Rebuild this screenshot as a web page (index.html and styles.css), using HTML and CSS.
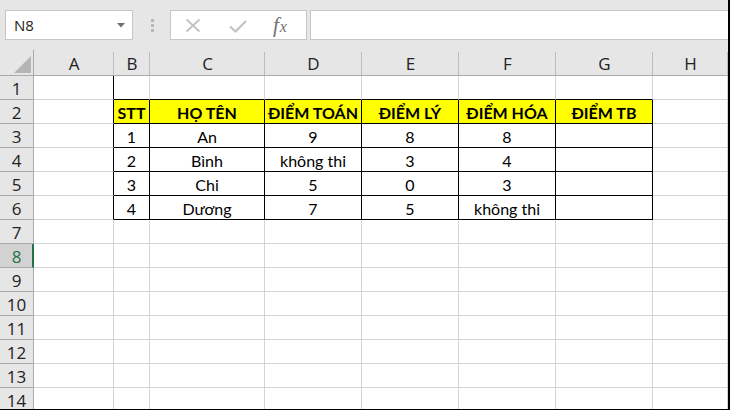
FILE: index.html
```html
<!DOCTYPE html>
<html>
<head>
<meta charset="utf-8">
<link rel="stylesheet" href="styles.css">
</head>
<body>
<div class="app">
  <div class="fbar">
    <div class="namebox">
      <span class="ref">N8</span>
      <svg class="caret" width="8" height="5" viewBox="0 0 8 5"><path d="M0 0H8L4 4.5Z" fill="#707070"/></svg>
    </div>
    <div class="grip"><i></i><i></i><i></i></div>
    <div class="fxbox">
      <svg class="ico" width="16" height="15" viewBox="0 0 16 15"><path d="M1.5 1.5L14.5 13.5M14.5 1.5L1.5 13.5" stroke="#c2c2c2" stroke-width="1.8" fill="none"/></svg>
      <svg class="ico" width="18" height="13" viewBox="0 0 18 13"><path d="M1 6.5L6.5 11.5L17 1" stroke="#c2c2c2" stroke-width="2.2" fill="none"/></svg>
      <span class="fx"><i>f</i><i class="fxx">x</i></span>
    </div>
    <div class="finput"></div>
  </div>
  <div class="sheet">
    <div class="ch corner"><svg width="17" height="17" viewBox="0 0 17 17"><path d="M17 0V17H0Z" fill="#b5b5b5"/></svg></div>
    <div class="ch">A</div><div class="ch">B</div><div class="ch">C</div><div class="ch">D</div><div class="ch">E</div><div class="ch">F</div><div class="ch">G</div><div class="ch">H</div>

    <div class="rh">1</div><div class="c lb"></div><div class="c tb"></div><div class="c tb"></div><div class="c tb"></div><div class="c tb"></div><div class="c tb"></div><div class="c tb"></div><div class="c"></div>

    <div class="rh">2</div><div class="c lb"></div><div class="c t hd">STT</div><div class="c t hd">HỌ TÊN</div><div class="c t hd">ĐIỂM TOÁN</div><div class="c t hd">ĐIỂM LÝ</div><div class="c t hd">ĐIỂM HÓA</div><div class="c t hd">ĐIỂM TB</div><div class="c"></div>

    <div class="rh">3</div><div class="c lb"></div><div class="c t">1</div><div class="c t">An</div><div class="c t">9</div><div class="c t">8</div><div class="c t">8</div><div class="c t"></div><div class="c"></div>

    <div class="rh">4</div><div class="c lb"></div><div class="c t">2</div><div class="c t">Bình</div><div class="c t">không thi</div><div class="c t">3</div><div class="c t">4</div><div class="c t"></div><div class="c"></div>

    <div class="rh">5</div><div class="c lb"></div><div class="c t">3</div><div class="c t">Chi</div><div class="c t">5</div><div class="c t">0</div><div class="c t">3</div><div class="c t"></div><div class="c"></div>

    <div class="rh">6</div><div class="c lb"></div><div class="c t">4</div><div class="c t">Dương</div><div class="c t">7</div><div class="c t">5</div><div class="c t">không thi</div><div class="c t"></div><div class="c"></div>

    <div class="rh">7</div><div class="c"></div><div class="c"></div><div class="c"></div><div class="c"></div><div class="c"></div><div class="c"></div><div class="c"></div><div class="c"></div>
    <div class="rh sel">8</div><div class="c"></div><div class="c"></div><div class="c"></div><div class="c"></div><div class="c"></div><div class="c"></div><div class="c"></div><div class="c"></div>
    <div class="rh">9</div><div class="c"></div><div class="c"></div><div class="c"></div><div class="c"></div><div class="c"></div><div class="c"></div><div class="c"></div><div class="c"></div>
    <div class="rh">10</div><div class="c"></div><div class="c"></div><div class="c"></div><div class="c"></div><div class="c"></div><div class="c"></div><div class="c"></div><div class="c"></div>
    <div class="rh">11</div><div class="c"></div><div class="c"></div><div class="c"></div><div class="c"></div><div class="c"></div><div class="c"></div><div class="c"></div><div class="c"></div>
    <div class="rh">12</div><div class="c"></div><div class="c"></div><div class="c"></div><div class="c"></div><div class="c"></div><div class="c"></div><div class="c"></div><div class="c"></div>
    <div class="rh">13</div><div class="c"></div><div class="c"></div><div class="c"></div><div class="c"></div><div class="c"></div><div class="c"></div><div class="c"></div><div class="c"></div>
    <div class="rh">14</div><div class="c"></div><div class="c"></div><div class="c"></div><div class="c"></div><div class="c"></div><div class="c"></div><div class="c"></div><div class="c"></div>
  </div>
</div>
</body>
</html>
```

FILE: styles.css
```css
* { box-sizing: border-box; }
html, body { margin: 0; padding: 0; background: #fff; }
.app {
  width: 730px;
  height: 410px;
  overflow: hidden;
  border-right: 2px solid #000;
  border-bottom: 1px solid #000;
  background: #e6e6e6;
  display: flex;
  flex-direction: column;
}
.fbar {
  height: 50px;
  flex: none;
  display: flex;
  align-items: flex-start;
  padding: 10px 0 0 5px;
}
.namebox {
  width: 128px;
  height: 30px;
  background: #fff;
  border: 1px solid #c6c6c6;
  display: flex;
  align-items: center;
  justify-content: space-between;
  padding: 0 7px 0 8px;
}
.ref {
  font-family: "Open Sans", "Noto Sans", sans-serif;
  font-size: 15px;
  color: #222;
}
.caret { margin-top: 1px; }
.grip {
  width: 37px;
  height: 30px;
  display: flex;
  flex-direction: column;
  align-items: center;
  justify-content: center;
  gap: 2px;
  padding-left: 1px;
}
.grip i {
  display: block;
  width: 3px;
  height: 3px;
  background: #b8b8b8;
}
.fxbox {
  width: 137px;
  height: 30px;
  background: #fff;
  border: 1px solid #c6c6c6;
  display: flex;
  align-items: center;
  padding-left: 14px;
}
.fxbox .ico:first-child { margin-right: 28px; }
.fxbox .ico:nth-child(2) { margin-right: 26px; margin-top: 2px; }
.fx {
  font-family: "Liberation Serif", "DejaVu Serif", serif;
  font-style: italic;
  color: #707070;
  font-size: 21px;
  line-height: 1;
  margin-top: 1px;
}
.fx i { font-style: italic; }
.fxx { font-size: 16px; margin-left: 1px; }
.finput {
  flex: 1;
  height: 30px;
  margin-left: 3px;
  background: #fff;
  border: 1px solid #c6c6c6;
  border-right: none;
}
.sheet {
  flex: 1;
  display: grid;
  grid-template-columns: 34px 80px 36px 115px 97px 97px 97px 97px 1fr;
  grid-template-rows: 26px repeat(14, 24px);
  background: #fff;
}
.ch {
  background: #e6e6e6 linear-gradient(#bdbdbd, #bdbdbd) right 0 bottom 0 / 1px 23px no-repeat;
  border-bottom: 1px solid #ababab;
  font-family: "Open Sans", "Noto Sans", sans-serif;
  font-size: 17px;
  color: #222;
  display: flex;
  align-items: center;
  justify-content: center;
  padding-top: 1px;
}
.ch:last-child { background: #e6e6e6; }
.corner {
  border-right: 1px solid #ababab;
  background: #e6e6e6;
  align-items: flex-end;
  justify-content: flex-end;
  padding: 0 2px 2px 0;
}
.rh {
  background: #e6e6e6;
  border-right: 1px solid #ababab;
  border-bottom: 1px solid #ababab;
  font-family: "Open Sans", "Noto Sans", sans-serif;
  font-size: 17px;
  color: #222;
  display: flex;
  align-items: center;
  justify-content: center;
  padding-top: 1px;
}
.rh.sel {
  background: #d2d2d2;
  color: #217346;
  border-right: 2px solid #217346;
  padding-left: 1px;
}
.c {
  border-right: 1px solid #d4d4d4;
  border-bottom: 1px solid #d4d4d4;
  font-family: Lato, "Liberation Sans", sans-serif;
  font-size: 16px;
  color: #000;
  display: flex;
  align-items: center;
  justify-content: center;
  padding-top: 2px;
  white-space: nowrap;
}
.c.lb { border-right-color: #000; }
.c.tb { border-bottom-color: #000; }
.c.t { border-right-color: #000; border-bottom-color: #000; }
.c.hd { background: #ffff00; font-weight: bold; }
```
